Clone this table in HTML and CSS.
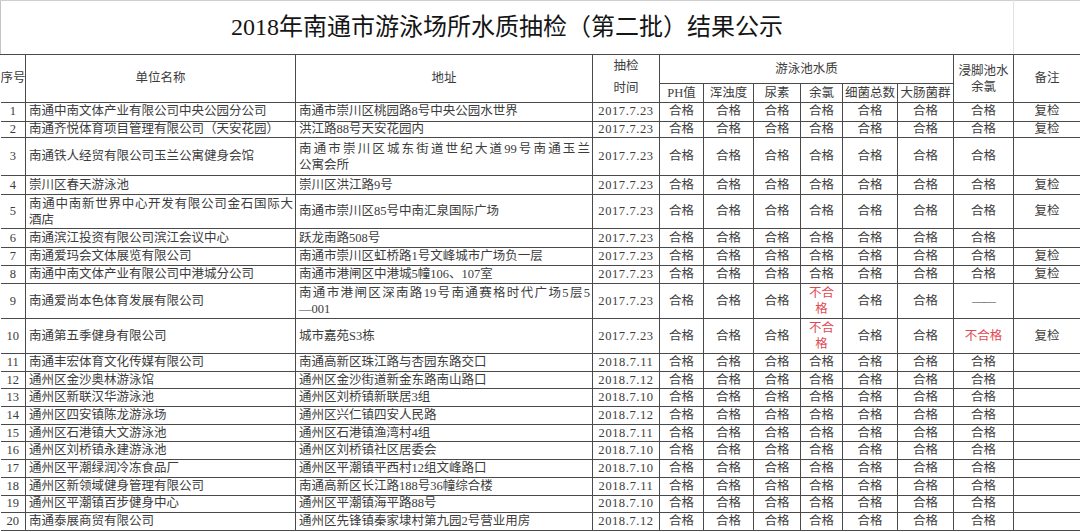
FILE: index.html
```html
<!DOCTYPE html>
<html lang="zh-CN">
<head>
<meta charset="utf-8">
<title>2018年南通市游泳场所水质抽检（第二批）结果公示</title>
<link rel="stylesheet" href="styles.css">
</head>
<body>
<table class="sheet">
  <colgroup>
    <col class="c-no"><col class="c-name"><col class="c-addr"><col class="c-date">
    <col class="c-ph"><col class="c-turb"><col class="c-urea"><col class="c-cl">
    <col class="c-bact"><col class="c-coli"><col class="c-foot"><col class="c-note">
  </colgroup>
  <tr class="r-title">
    <td class="title" colspan="11">2018年南通市游泳场所水质抽检（第二批）结果公示</td>
    <td class="title-side"></td>
  </tr>
  <tr class="r-h1">
    <th class="first" rowspan="2">序号</th>
    <th rowspan="2">单位名称</th>
    <th rowspan="2">地址</th>
    <th rowspan="2" class="h-date">抽检<br>时间</th>
    <th colspan="6">游泳池水质</th>
    <th rowspan="2" class="two">浸脚池水<br>余氯</th>
    <th rowspan="2">备注</th>
  </tr>
  <tr class="r-h2">
    <th>PH值</th><th>浑浊度</th><th>尿素</th><th>余氯</th><th>细菌总数</th><th>大肠菌群</th>
  </tr>
  <tr class="r01"><td class="first">1</td><td class="l">南通中南文体产业有限公司中央公园分公司</td><td class="l">南通市崇川区桃园路8号中央公园水世界</td><td class="d">2017.7.23</td><td>合格</td><td>合格</td><td>合格</td><td>合格</td><td>合格</td><td>合格</td><td>合格</td><td>复检</td></tr>
  <tr class="r02"><td class="first">2</td><td class="l">南通齐悦体育项目管理有限公司（天安花园）</td><td class="l">洪江路88号天安花园内</td><td class="d">2017.7.23</td><td>合格</td><td>合格</td><td>合格</td><td>合格</td><td>合格</td><td>合格</td><td>合格</td><td>复检</td></tr>
  <tr class="r38"><td class="first">3</td><td class="l">南通铁人经贸有限公司玉兰公寓健身会馆</td><td class="l"><span class="dist">南通市崇川区城东街道世纪大道99号南通玉兰</span><span class="ln">公寓会所</span></td><td class="d">2017.7.23</td><td>合格</td><td>合格</td><td>合格</td><td>合格</td><td>合格</td><td>合格</td><td>合格</td><td></td></tr>
  <tr class="r19"><td class="first">4</td><td class="l">崇川区春天游泳池</td><td class="l">崇川区洪江路9号</td><td class="d">2017.7.23</td><td>合格</td><td>合格</td><td>合格</td><td>合格</td><td>合格</td><td>合格</td><td>合格</td><td>复检</td></tr>
  <tr class="r34"><td class="first">5</td><td class="l"><span class="dist">南通中南新世界中心开发有限公司金石国际大</span><span class="ln">酒店</span></td><td class="l">南通市崇川区85号中南汇泉国际广场</td><td class="d">2017.7.23</td><td>合格</td><td>合格</td><td>合格</td><td>合格</td><td>合格</td><td>合格</td><td>合格</td><td>复检</td></tr>
  <tr class="r19"><td class="first">6</td><td class="l">南通滨江投资有限公司滨江会议中心</td><td class="l">跃龙南路508号</td><td class="d">2017.7.23</td><td>合格</td><td>合格</td><td>合格</td><td>合格</td><td>合格</td><td>合格</td><td>合格</td><td></td></tr>
  <tr class="r18"><td class="first">7</td><td class="l">南通爱玛会文体展览有限公司</td><td class="l">南通市崇川区虹桥路1号文峰城市广场负一层</td><td class="d">2017.7.23</td><td>合格</td><td>合格</td><td>合格</td><td>合格</td><td>合格</td><td>合格</td><td>合格</td><td>复检</td></tr>
  <tr class="r18"><td class="first">8</td><td class="l">南通中南文体产业有限公司中港城分公司</td><td class="l">南通市港闸区中港城5幢106、107室</td><td class="d">2017.7.23</td><td>合格</td><td>合格</td><td>合格</td><td>合格</td><td>合格</td><td>合格</td><td>合格</td><td>复检</td></tr>
  <tr class="r35"><td class="first">9</td><td class="l">南通爱尚本色体育发展有限公司</td><td class="l"><span class="dist">南通市港闸区深南路19号南通赛格时代广场5层5</span><span class="ln">—001</span></td><td class="d">2017.7.23</td><td>合格</td><td>合格</td><td>合格</td><td class="bad two">不合<br>格</td><td>合格</td><td>合格</td><td class="dash">——</td><td></td></tr>
  <tr class="r35"><td class="first">10</td><td class="l">南通第五季健身有限公司</td><td class="l">城市嘉苑S3栋</td><td class="d">2017.7.23</td><td>合格</td><td>合格</td><td>合格</td><td class="bad two">不合<br>格</td><td>合格</td><td>合格</td><td class="bad">不合格</td><td>复检</td></tr>
  <tr class="rs"><td class="first">11</td><td class="l">南通丰宏体育文化传媒有限公司</td><td class="l">南通高新区珠江路与杏园东路交口</td><td class="d">2018.7.11</td><td>合格</td><td>合格</td><td>合格</td><td>合格</td><td>合格</td><td>合格</td><td>合格</td><td></td></tr>
  <tr class="rs"><td class="first">12</td><td class="l">通州区金沙奥林游泳馆</td><td class="l">通州区金沙街道新金东路南山路口</td><td class="d">2018.7.12</td><td>合格</td><td>合格</td><td>合格</td><td>合格</td><td>合格</td><td>合格</td><td>合格</td><td></td></tr>
  <tr class="rs"><td class="first">13</td><td class="l">通州区新联汉华游泳池</td><td class="l">通州区刘桥镇新联居3组</td><td class="d">2018.7.10</td><td>合格</td><td>合格</td><td>合格</td><td>合格</td><td>合格</td><td>合格</td><td>合格</td><td></td></tr>
  <tr class="rs"><td class="first">14</td><td class="l">通州区四安镇陈龙游泳场</td><td class="l">通州区兴仁镇四安人民路</td><td class="d">2018.7.12</td><td>合格</td><td>合格</td><td>合格</td><td>合格</td><td>合格</td><td>合格</td><td>合格</td><td></td></tr>
  <tr class="rs"><td class="first">15</td><td class="l">通州区石港镇大文游泳池</td><td class="l">通州区石港镇渔湾村4组</td><td class="d">2018.7.11</td><td>合格</td><td>合格</td><td>合格</td><td>合格</td><td>合格</td><td>合格</td><td>合格</td><td></td></tr>
  <tr class="rs"><td class="first">16</td><td class="l">通州区刘桥镇永建游泳池</td><td class="l">通州区刘桥镇社区居委会</td><td class="d">2018.7.10</td><td>合格</td><td>合格</td><td>合格</td><td>合格</td><td>合格</td><td>合格</td><td>合格</td><td></td></tr>
  <tr class="rs"><td class="first">17</td><td class="l">通州区平潮绿润冷冻食品厂</td><td class="l">通州区平潮镇平西村12组文峰路口</td><td class="d">2018.7.10</td><td>合格</td><td>合格</td><td>合格</td><td>合格</td><td>合格</td><td>合格</td><td>合格</td><td></td></tr>
  <tr class="rs"><td class="first">18</td><td class="l">通州区新领域健身管理有限公司</td><td class="l">南通高新区长江路188号36幢综合楼</td><td class="d">2018.7.11</td><td>合格</td><td>合格</td><td>合格</td><td>合格</td><td>合格</td><td>合格</td><td>合格</td><td></td></tr>
  <tr class="rs"><td class="first">19</td><td class="l">通州区平潮镇百步健身中心</td><td class="l">通州区平潮镇海平路88号</td><td class="d">2018.7.10</td><td>合格</td><td>合格</td><td>合格</td><td>合格</td><td>合格</td><td>合格</td><td>合格</td><td></td></tr>
  <tr class="rs"><td class="first">20</td><td class="l">南通泰展商贸有限公司</td><td class="l">通州区先锋镇秦家埭村第九园2号营业用房</td><td class="d">2018.7.12</td><td>合格</td><td>合格</td><td>合格</td><td>合格</td><td>合格</td><td>合格</td><td>合格</td><td></td></tr>
</table>
</body>
</html>
```
FILE: styles.css
```css
html, body {
  margin: 0;
  padding: 0;
  background: #ffffff;
}

body {
  font-family: "Liberation Serif", "Noto Sans CJK SC", serif;
  color: #3c3c3c;
}

.sheet {
  border-collapse: collapse;
  table-layout: fixed;
  width: 1080px;
  font-size: 12.5px;
}

.c-no { width: 25px; }
.c-name { width: 270px; }
.c-addr { width: 297px; }
.c-date { width: 67px; }
.c-ph { width: 44px; }
.c-turb { width: 50px; }
.c-urea { width: 47px; }
.c-cl { width: 42px; }
.c-bact { width: 55px; }
.c-coli { width: 56px; }
.c-foot { width: 60px; }
.c-note { width: 67px; }

.sheet td,
.sheet th {
  border: 1px solid #4a4a4a;
  padding: 0;
  text-align: center;
  vertical-align: middle;
  font-weight: normal;
  line-height: 11px;
  white-space: nowrap;
  overflow: hidden;
}

.sheet .first {
  border-left: none;
}

.r-title { height: 54px; }
.r-h1 { height: 29px; }
.r-h2 { height: 19px; }
.r01 { height: 18.5px; }
.r02 { height: 16.5px; }
.rs { height: 17.7px; }
.r18 { height: 18px; }
.r19 { height: 19px; }
.r34 { height: 34px; }
.r35 { height: 35px; }
.r38 { height: 38px; }

.sheet .title {
  border-top: 1px solid #cfcfcf;
  border-left: 1px solid #c4c4c4;
  border-right: 1px solid #e2e2e2;
  font-size: 24px;
  color: #151515;
  line-height: 30px;
  padding-bottom: 2px;
}

.sheet .title-side {
  border-top: 1px solid #cfcfcf;
  border-left: 1px solid #e2e2e2;
}

.sheet .h-date {
  line-height: 22px;
  padding-bottom: 3px;
}

.sheet .two {
  line-height: 16px;
}

.sheet .l {
  text-align: left;
  padding-left: 3px;
}

.sheet .d {
  letter-spacing: 0.6px;
}

.dist {
  display: block;
  line-height: 16px;
  text-align: justify;
  text-align-last: justify;
  padding-right: 2px;
}

.ln {
  display: block;
  line-height: 16px;
}

.sheet .dash {
  letter-spacing: -1px;
}

.sheet .bad {
  color: #e2484f;
}
```
